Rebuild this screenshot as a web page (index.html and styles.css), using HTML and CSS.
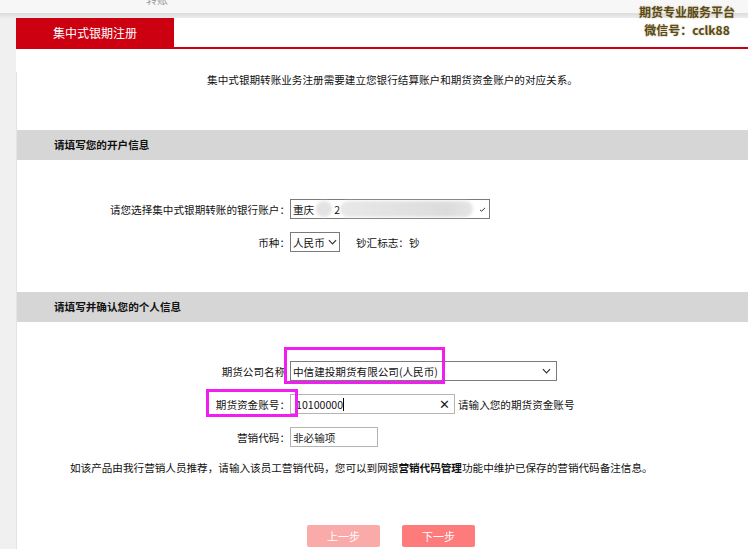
FILE: index.html
```html
<!DOCTYPE html>
<html lang="zh-CN">
<head>
<meta charset="utf-8">
<title>集中式银期注册</title>
<link rel="stylesheet" href="styles.css">
</head>
<body>
<div class="topbar"><span class="topbar-text">转账</span></div>
<div class="shadow"></div>
<div class="watermark">
  <div>期货专业服务平台</div>
  <div>微信号：cclk88</div>
</div>
<div class="main">
  <div class="tabs">
    <div class="tab">集中式银期注册</div>
  </div>
  <div class="panel">
    <p class="intro">集中式银期转账业务注册需要建立您银行结算账户和期货资金账户的对应关系。</p>

    <div class="section-head">请填写您的开户信息</div>
    <div class="form form-a">
      <div class="row">
        <div class="label">请您选择集中式银期转账的银行账户：</div>
        <div class="select select-bank">
          <span class="val">重庆</span>
          <span class="blob blob-round"></span>
          <span class="val digit">2</span>
          <span class="blob blob-long"></span>
          <svg class="chev chev-small" viewBox="0 0 8 6" width="7" height="5"><path d="M1 3.5 L3 5 L7 1" fill="none" stroke="#333" stroke-width="1.2"/></svg>
        </div>
      </div>
      <div class="row">
        <div class="label">币种：</div>
        <div class="select select-cur">
          <span class="val">人民币</span>
          <svg class="chev" viewBox="0 0 10 6" width="9" height="6"><path d="M1 1 L5 5 L9 1" fill="none" stroke="#333" stroke-width="1.3"/></svg>
        </div>
        <div class="flag">钞汇标志：钞</div>
      </div>
    </div>

    <div class="section-head">请填写并确认您的个人信息</div>
    <div class="form form-b">
      <div class="row">
        <div class="label">期货公司名称&nbsp;&nbsp;</div>
        <div class="select select-co">
          <span class="val">中信建投期货有限公司(人民币)</span>
          <svg class="chev" viewBox="0 0 10 6" width="9" height="6"><path d="M1 1 L5 5 L9 1" fill="none" stroke="#333" stroke-width="1.3"/></svg>
        </div>
      </div>
      <div class="row">
        <div class="label">期货资金账号：</div>
        <div class="input input-acct">
          <span class="val">10100000</span><span class="caret"></span>
          <span class="clear">✕</span>
        </div>
        <div class="hint">请输入您的期货资金账号</div>
      </div>
      <div class="row">
        <div class="label">营销代码：</div>
        <div class="input input-code"><span class="val">非必输项</span></div>
      </div>
      <div class="mark mark-co"></div>
      <div class="mark mark-acct"></div>
    </div>

    <p class="note">如该产品由我行营销人员推荐，请输入该员工营销代码，您可以到网银<b>营销代码管理</b>功能中维护已保存的营销代码备注信息。</p>

    <div class="buttons">
      <div class="btn btn-prev">上一步</div>
      <div class="btn btn-next">下一步</div>
    </div>
  </div>
</div>
</body>
</html>
```
FILE: styles.css
```css
* { box-sizing: border-box; }
html, body {
  margin: 0;
  padding: 0;
  height: 100%;
  overflow: hidden;
}
body {
  background: #f0f0f0;
  font-family: "Noto Sans CJK SC", "Noto Sans", sans-serif;
  font-size: 10.6px;
  color: #111;
  position: relative;
}
.topbar {
  height: 13px;
  background: #f7f7f7;
  overflow: hidden;
  padding-left: 146px;
}
.topbar-text {
  display: block;
  margin-top: -8px;
  line-height: 14px;
  font-size: 11px;
  color: #999;
}
.shadow {
  height: 5px;
  background: linear-gradient(#dcdcdc, #ececec);
}
.watermark {
  position: absolute;
  top: 3px;
  left: 636px;
  width: 102px;
  text-align: center;
  font-weight: bold;
  font-size: 12px;
  line-height: 17.5px;
  color: #5a4a1c;
  text-shadow: 0 0 2px #c8b98a;
}
.main {
  margin-left: 16px;
  background: #fff;
  height: 531px;
}
.tabs {
  display: flex;
  height: 31px;
  border-bottom: 2px solid #cc0011;
}
.tab {
  width: 158px;
  height: 29px;
  background: #cc0011;
  color: #fff;
  font-size: 12px;
  line-height: 29px;
  text-align: center;
}
.panel {
  border-left: 1px solid #e4e4e4;
  height: 500px;
}
.intro {
  margin: 23px 0 0;
  padding-left: 20px;
  line-height: 16px;
  text-align: center;
}
.section-head {
  margin-top: 42px;
  height: 30px;
  line-height: 30px;
  background: #d6d6d6;
  padding-left: 37px;
  font-weight: bold;
}
.form {
  display: flex;
  flex-direction: column;
  gap: 13px;
  padding-top: 39px;
  position: relative;
}
.form-a + .section-head { margin-top: 40px; }
.row {
  display: flex;
  align-items: center;
  height: 20px;
}
.label {
  width: 273px;
  text-align: right;
  white-space: nowrap;
}
.select {
  height: 20px;
  border: 1px solid #7a7a7a;
  display: flex;
  align-items: center;
  padding-left: 2px;
  position: relative;
  background: #fff;
}
.select-bank { width: 200px; }
.select-cur { width: 50px; }
.select-co { width: 267px; }
.val { white-space: nowrap; }
.digit { margin-left: 2px; }
.chev { margin-left: auto; margin-right: 5px; }
.select-cur .chev { margin-left: 3px; margin-right: 0; }
.chev-small { margin-right: 3px; }
.blob {
  display: block;
  background: #e3e3e3;
  filter: blur(1.5px);
  height: 16px;
}
.blob-round {
  width: 16px;
  border-radius: 8px;
  margin-left: 2px;
}
.blob-long {
  width: 133px;
  border-radius: 8px;
  background: linear-gradient(90deg, #e8e8e8, #e2e2e2 40%, #dcdcdc 80%, #e6e6e6);
}
.flag { margin-left: 16px; }
.input {
  height: 20px;
  border: 1px solid #b4b4b4;
  display: flex;
  align-items: center;
  padding-left: 2px;
  background: #fff;
}
.input-acct { width: 165px; padding-left: 5px; }
.input-code { width: 88px; color: #222; }
.caret {
  display: block;
  width: 1px;
  height: 13px;
  background: #000;
}
.clear {
  margin-left: auto;
  margin-right: 4px;
  font-size: 13px;
  line-height: 14px;
  color: #222;
}
.hint { margin-left: 3px; }
.mark {
  position: absolute;
  border: 3px solid #f01ef0;
}
.mark-co {
  left: 267px;
  top: 25px;
  width: 161px;
  height: 37px;
}
.mark-acct {
  left: 189px;
  top: 67px;
  width: 92px;
  height: 28px;
}
.note {
  margin: 13px 0 0;
  padding-left: 53px;
  line-height: 16px;
  white-space: nowrap;
}
.buttons {
  display: flex;
  justify-content: center;
  gap: 22px;
  margin-top: 49px;
  padding-left: 17px;
}
.btn {
  width: 73px;
  height: 22px;
  line-height: 22px;
  border-radius: 2px;
  color: #fff;
  text-align: center;
  font-size: 11px;
}
.btn-prev { background: #fbaaaa; }
.btn-next { background: #fe7b7b; }
```
